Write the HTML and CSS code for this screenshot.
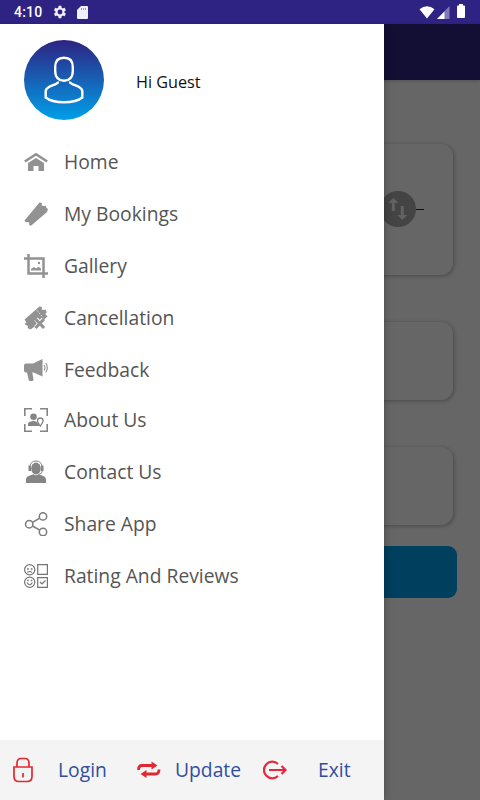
FILE: index.html
```html
<!DOCTYPE html>
<html lang="en">
<head>
    <meta charset="UTF-8">
    <meta name="viewport" content="width=device-width, initial-scale=1.0">
    <title>Menu</title>

    <link rel="stylesheet" href="styles.css">
</head>
<body>
    <header class="status-bar">
        <span class="time">4:10</span>
        <svg class="status-gear" width="14" height="14" viewBox="2 2 20 20"><path fill="#f1effa" d="M19.400 13a7.500 7.500 0 0 0 0-2l2.100-1.600-2-3.500-2.500 1a7.500 7.500 0 0 0-1.700-1L15 3h-4l-.5 2.900a7.500 7.500 0 0 0-1.700 1l-2.500-1-2 3.500L6.400 11a7.500 7.500 0 0 0 0 2l-2.100 1.600 2 3.500 2.500-1a7.500 7.500 0 0 0 1.700 1L11 21h4l.3-2.900a7.500 7.500 0 0 0 1.700-1l2.500 1 2-3.500zM13 15.500a3.500 3.500 0 1 1 0-7 3.500 3.500 0 0 1 0 7z" transform="translate(-1)"/></svg>
        <svg class="status-sd" width="11" height="13" viewBox="0 0 11 13"><path fill="#f1effa" d="M4 0h6q1 0 1 1v11q0 1-1 1H1q-1 0-1-1V4z"/><path stroke="#a29bcf" stroke-width="1" d="M4.500 2v2M6.500 2v2M8.500 2v2"/></svg>
        <div class="status-right">
            <svg width="16" height="13" viewBox="0 0 16 13"><path fill="#fff" d="M.5 3.200Q8-2.600 15.500 3.200L8 12.500z"/></svg>
            <svg class="status-signal" width="13" height="13" viewBox="0 0 13 13"><path fill="#8279b6" d="M12.500 0v13H0z"/><path fill="#fff" d="M7.500 5.500V13H0z"/></svg>
            <svg class="status-battery" width="8" height="14" viewBox="0 0 8 14"><path fill="#fff" d="M2 0h4v1.500h1q1 0 1 1V13q0 1-1 1H1q-1 0-1-1V2.500q0-1 1-1h1z"/></svg>
        </div>
    </header>

    <main class="screen">
        <div class="app-bar"></div>
        <div class="booking">
            <div class="card route">
                <hr>
                <svg class="swap" width="36" height="36" viewBox="0 0 36 36"><circle cx="18" cy="18" r="18" fill="#aaa"/><path fill="#f4f4f4" d="M13.300 7l5 5h-3.500v8h-3v-8H8.300zM22.300 29l-5-5h3.500v-9h3v9h3.500z"/></svg>
            </div>
            <div class="card date"></div>
            <div class="card seats"></div>
            <div class="search-button"></div>
        </div>
    </main>

    <div class="drawer-overlay"></div>

    <aside class="drawer">
        <div class="profile">
            <svg class="avatar" width="80" height="80" viewBox="0 0 80 80">
                <defs>
                    <linearGradient id="avatar-fill" x1="0" y1="0" x2="0" y2="1">
                        <stop offset="0" stop-color="#2e2382"/>
                        <stop offset="1" stop-color="#009fe9"/>
                    </linearGradient>
                </defs>
                <circle cx="40" cy="40" r="40" fill="url(#avatar-fill)"/>
                <g fill="none" stroke="#fff" stroke-width="2.400" stroke-linecap="round">
                    <path d="M40 17.800C33.500 17.800 31.200 21.500 31.200 27V31C31.200 37.500 35 40.800 40 40.800S48.800 37.500 48.800 31V27C48.800 21.500 46.500 17.800 40 17.800z"/>
                    <path d="M34 42.500C31 46 22.500 45.500 21.700 51V57.500C26 61 33 62.200 40 62.200S54 61 58.300 57.500V51C57.500 45.500 49 46 46 42.500"/>
                </g>
            </svg>
            <span class="greeting">Hi Guest</span>
        </div>

        <nav class="menu">
            <a class="menu-item">
                <svg viewBox="0 0 24 24"><path fill="none" stroke="#929292" stroke-width="2.600" d="M.8 11.500L12 4.200l11.200 7.300"/><path fill="#929292" d="M4 13L12 8l8 5v8h-5.500v-5h-5v5H4z"/></svg>
                <span>Home</span>
            </a>
            <a class="menu-item">
                <svg viewBox="0 0 24 24"><path fill="#929292" d="M.5 18.500L15.500.5l2.500.5-.3 2.500 2 .5 2-.3.800 2.300 1.500 1-1 3L7 23.700l-2-1 .3-2-1.500-.7-2 .3z"/></svg>
                <span>My Bookings</span>
            </a>
            <a class="menu-item">
                <svg viewBox="0 0 24 24"><path fill="none" stroke="#929292" stroke-width="2.500" d="M0 4.500h19.500V24M4.500 0v19.500H24"/><path fill="#929292" d="M7 16.500V15l3-2 2 1.500 2.500-1.800 2.500 1.800v2z"/><circle cx="15" cy="9" r="1.200" fill="#929292"/></svg>
                <span>Gallery</span>
            </a>
            <a class="menu-item">
                <svg viewBox="0 0 24 24"><path fill="#929292" d="M.5 13.500L15.500.5 18 1l-.3 2.500 2 .5 2-.5 1 3-1.500 1.500 2.300 2.500-8 6.500-9 6.500L3.500 22q1.200-2-.7-2.500L.5 18l2-1.500z"/><path stroke="#fff" stroke-width=".8" stroke-dasharray="1.500 1.500" d="M13 4.500l6 7"/><path stroke="#fff" stroke-width="4.500" d="M12 13l7.500 8.500M19.500 13L12 21.500"/><path stroke="#929292" stroke-width="3" d="M11.500 13l8.500 9M20 13l-8.500 9"/></svg>
                <span>Cancellation</span>
            </a>
            <a class="menu-item feedback">
                <svg viewBox="0 0 24 24"><path fill="#929292" d="M2 5.500h7L18.500 1v17.500L9.500 14.500H8.300l1.200 7q0 1.500-1.500 1.500H6q-1 0-1.300-1L3 14.500H2q-2 0-2-2V7.500q0-2 2-2z"/><path fill="none" stroke="#929292" stroke-width="1.100" d="M20 7q2 2.700 0 5.500M21.700 5q3.300 4.700 0 9.500"/></svg>
                <span>Feedback</span>
            </a>
            <a class="menu-item">
                <svg viewBox="0 0 24 24"><path fill="none" stroke="#858585" stroke-width="1.600" d="M.8 8V.8H8M16 .8h7.200V8M23.200 16v7.200H16M8 23.200H.8V16"/><circle cx="9.500" cy="8.700" r="3.300" fill="#858585"/><path fill="#858585" d="M4 18v-2q0-2 3-2.500l2.500-.7 3 1 3.500 4.200z"/><path fill="#fff" stroke="#858585" stroke-width="1.300" d="M16.300 18.200q-2.800-4-2.800-5.400a2.800 2.800 0 0 1 5.600 0q0 1.400-2.800 5.400z"/></svg>
                <span>About Us</span>
            </a>
            <a class="menu-item">
                <svg viewBox="0 0 24 24"><path fill="none" stroke="#858585" stroke-width="1" d="M5.800 8Q6 1 12 1t6.200 7M18.500 10q0 4-4 4.500"/><ellipse cx="12" cy="8.500" rx="4.800" ry="6" fill="#858585"/><path fill="#858585" d="M4.500 5.500H7v5.500H4.500zM17 5.500h2.500v5.500H17zM2 23v-3.500q0-3 4-4l3.500-1.200q2.500 2 5 0L18 15.500q4 1 4 4V23z"/></svg>
                <span>Contact Us</span>
            </a>
            <a class="menu-item">
                <svg viewBox="0 0 24 24"><g fill="none" stroke="#7c7c7c" stroke-width="1.500"><circle cx="5.200" cy="12.200" r="3.700"/><circle cx="19" cy="4.400" r="3.700"/><circle cx="19" cy="20" r="3.700"/><path d="M8.500 10.400l7.300-4.200M8.500 14l7.300 4.200"/></g></svg>
                <span>Share App</span>
            </a>
            <a class="menu-item">
                <svg viewBox="0 0 24 24"><g fill="none" stroke="#757575" stroke-width="1.200"><circle cx="5.700" cy="5.800" r="5.100"/><circle cx="5.700" cy="18.300" r="5.100"/><path d="M13.700.7h9.700v9.700h-9.700zM13.700 13.600h9.700v9.700h-9.700zM3.400 8.500q2.300-2 4.600 0M3 18.500q2.700 4.500 5.400 0M16 18l2 2 3.500-3.500"/></g><path fill="#757575" d="M3 4.200h1.800v1.500H3zM6.700 4.200h1.800v1.500H6.700zM3.200 15.800h1.500v1.500H3.200zM6.800 15.800h1.500v1.500H6.800z"/></svg>
                <span>Rating And Reviews</span>
            </a>
        </nav>

        <footer class="drawer-footer">
            <a class="login">
                <svg width="20" height="26" viewBox="0 0 20 26"><g fill="none" stroke="#e22832" stroke-width="1.700"><path d="M1 10h18v9.500q0 5-5 5H6q-5 0-5-5zM4 10V6.500Q4 1.500 8 1.500h4q4 0 4 5V10"/><path d="M10 16v4.500"/></g></svg>
                <span>Login</span>
            </a>
            <a class="update">
                <svg width="24" height="18" viewBox="0 0 24 18"><g fill="none" stroke="#e22832" stroke-width="2.800"><path d="M1.500 9Q1.500 4.500 5 4.500h10M22 8.500q0 4.500-3.500 4.500H9"/></g><path fill="#e22832" d="M14.500.5l6 4-6 4zM9.500 9l-6 4 6 4z"/></svg>
                <span>Update</span>
            </a>
            <a class="exit">
                <svg width="25" height="20" viewBox="0 0 25 20"><g fill="none" stroke="#e9263d" stroke-width="2.200"><path d="M15 4A8.300 8.300 0 1 0 15 16M6 10h16.500"/><path d="M18.500 6l4 4-4 4"/></g></svg>
                <span>Exit</span>
            </a>
        </footer>
    </aside>
</body>
</html>
```
FILE: styles.css
```css
* {
    margin: 0;
    padding: 0;
    box-sizing: border-box;
}

body {
    width: 480px;
    height: 800px;
    position: relative;
    overflow: hidden;
    background-color: white;
    font-family: 'Open Sans', sans-serif;
}

svg {
    display: block;
    flex: none;
}

/* status bar */
.status-bar {
    display: flex;
    align-items: center;
    height: 24px;
    padding: 0 14px;
    background-color: #2e2382;
    color: white;
}

.time {
    width: 39px;
    font: 500 14px/24px Roboto, sans-serif;
    letter-spacing: 0.2px;
}

.status-sd {
    margin-left: 10px;
}

.status-right {
    display: flex;
    align-items: center;
    margin-left: auto;
}

.status-signal {
    margin-left: 2px;
}

.status-battery {
    margin: 0 1px 2px 7px;
}

/* booking screen */
.app-bar {
    height: 56px;
    background-color: #2e2382;
    box-shadow: 0 1px 3px rgba(0,0,0,0.2);
}

.booking {
    padding: 64px 23px 0 27px;
}

.card {
    margin-right: 4px;
    border-radius: 12px;
    background-color: white;
    box-shadow: 1px 1px 4px rgba(0,0,0,0.3);
}

.route {
    display: flex;
    align-items: center;
    height: 131px;
    padding-right: 29px;
}

.route hr {
    flex: 1;
    height: 1px;
    margin-right: -44px;
    border: none;
    background-color: #222;
}

.swap {
    position: relative;
    margin: 0 8px 1px 0;
}

.date {
    height: 78px;
    margin-top: 47px;
}

.seats {
    height: 78px;
    margin-top: 47px;
}

.search-button {
    height: 52px;
    margin-top: 21px;
    border-radius: 9px;
    background-color: #009fe9;
}

.drawer-overlay {
    position: absolute;
    top: 24px;
    right: 0;
    bottom: 0;
    left: 0;
    background-color: rgba(0,0,0,0.6);
}

/* drawer */
.drawer {
    position: absolute;
    top: 24px;
    bottom: 0;
    left: 0;
    display: flex;
    flex-direction: column;
    width: 384px;
    background-color: white;
    box-shadow: 0 0 8px rgba(0,0,0,0.3);
    clip-path: inset(0 -12px 0 0);
}

.profile {
    display: flex;
    align-items: center;
    padding: 16px 24px;
}

.greeting {
    margin: 4px 0 0 32px;
    font-size: 16.200px;
    color: #111;
}

.menu {
    flex: 1;
}

.menu-item {
    display: flex;
    align-items: center;
    height: 52px;
    padding-left: 24px;
    font-size: 19.300px;
    color: #555;
}

.menu-item span,
.drawer-footer span {
    margin-bottom: 2px;
}

.menu-item svg {
    width: 24px;
    height: 24px;
    margin-right: 16px;
}

.feedback {
    margin-bottom: -2px;
}

.drawer-footer {
    display: flex;
    align-items: center;
    height: 60px;
    background-color: #f4f4f4;
    font-size: 19.300px;
    color: #314e9e;
}

.drawer-footer a {
    display: flex;
    align-items: center;
}

.login {
    width: 137px;
    padding-left: 13px;
}

.login span {
    margin-left: 25px;
}

.update {
    width: 126px;
}

.update span {
    margin-left: 14px;
}

.exit span {
    margin-left: 30px;
}
```
